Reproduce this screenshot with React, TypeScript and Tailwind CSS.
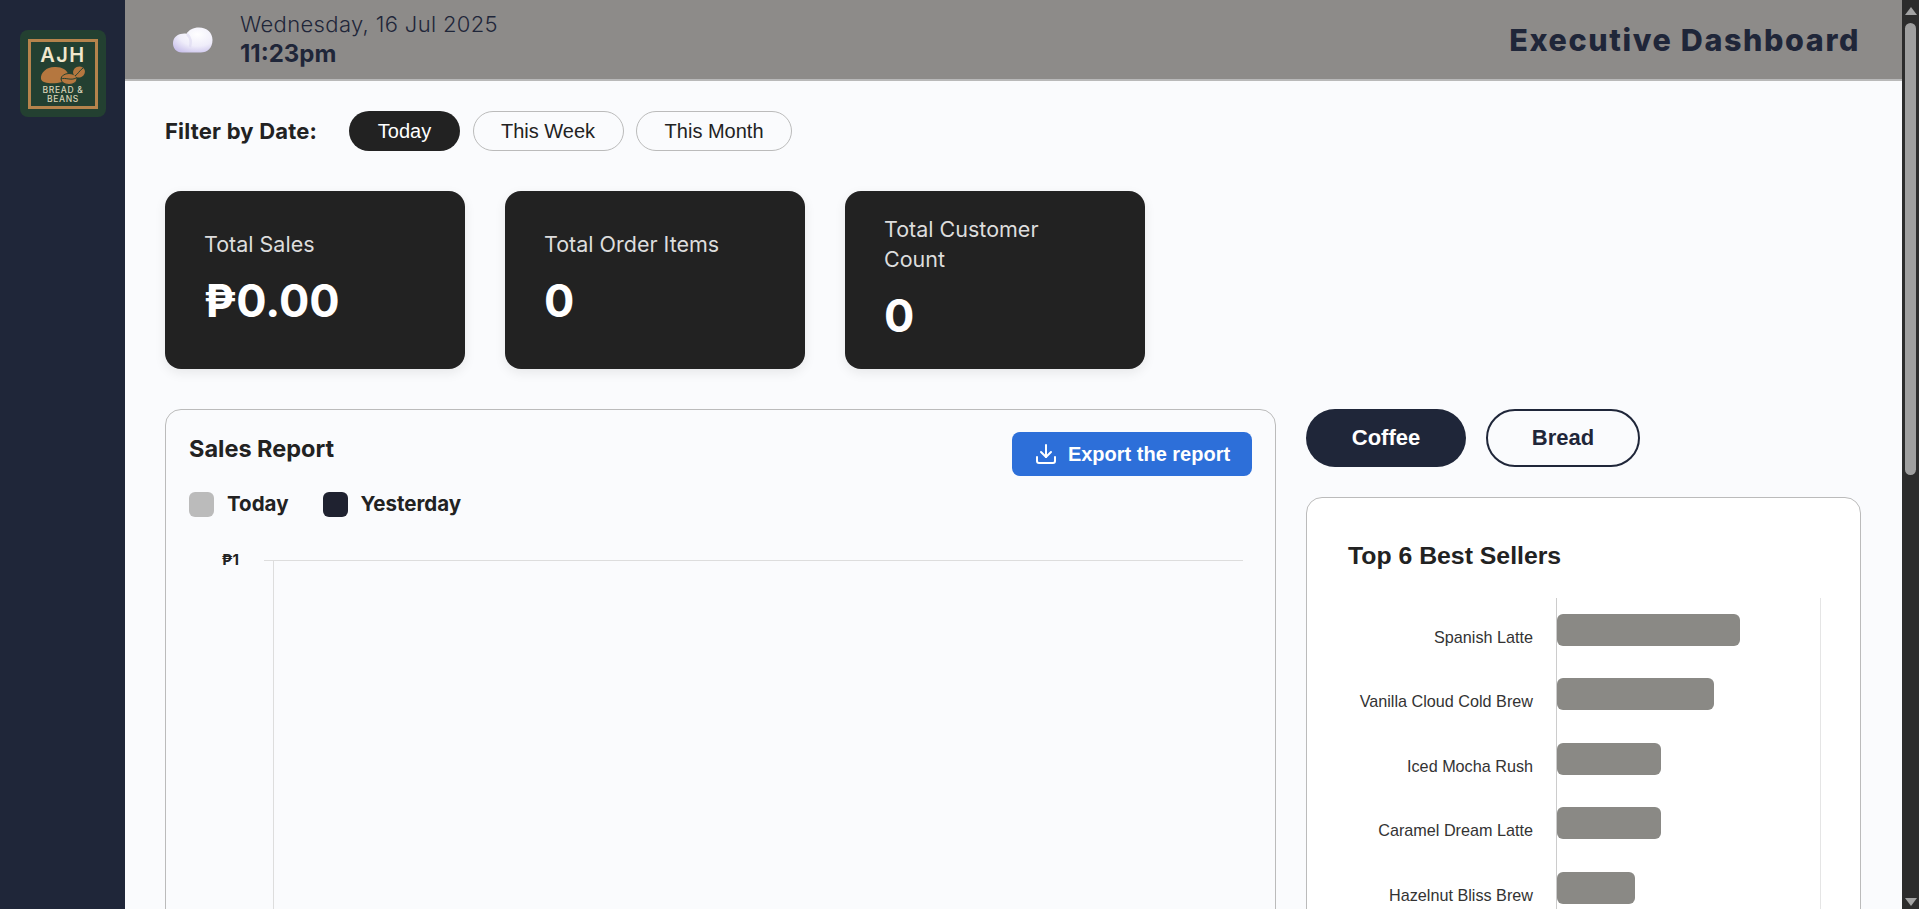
import { Download } from "lucide-react";

const sellers = [
  { name: "Spanish Latte", qty: 7 },
  { name: "Vanilla Cloud Cold Brew", qty: 6 },
  { name: "Iced Mocha Rush", qty: 4 },
  { name: "Caramel Dream Latte", qty: 4 },
  { name: "Hazelnut Bliss Brew", qty: 3 },
];

function Logo() {
  return (
    <div className="flex h-[87px] w-[86px] items-center justify-center rounded-lg bg-[#234031]">
      <div className="flex h-[70px] w-[70px] flex-col items-center border-[3px] border-[#b5834c] pt-[3px] font-['Inter',sans-serif] text-[#f1e7cd]">
        <div className="text-[20px] leading-[21px] font-semibold tracking-[1.5px]">AJH</div>
        <svg viewBox="0 0 46 19" className="h-[19px] w-[46px]">
          <path d="M1 13C0 6 8 0 16 1c6 0 11 3 12 7-3 1-5 4-6 8-7 2-20 2-21-3z" fill="#b5773f" />
          <ellipse cx="29" cy="13" rx="8" ry="5.5" fill="#b5773f" stroke="#234031" strokeWidth="1" />
          <path d="M21 13c4-2 10 2 15-1" stroke="#234031" strokeWidth="1" fill="none" />
          <ellipse cx="39" cy="6" rx="6" ry="5.5" fill="#b5773f" transform="rotate(-25 39 6)" />
          <path d="M35 10c3-2 4-5 8-8" stroke="#234031" strokeWidth="1" fill="none" />
        </svg>
        <div className="mt-[1px] text-center text-[8.5px] leading-[9.5px] font-medium tracking-[0.7px] text-[#d9d3b8]">
          BREAD &amp;
          <br />
          BEANS
        </div>
      </div>
    </div>
  );
}

function Cloud() {
  return (
    <svg viewBox="0 0 42 28" className="h-[28px] w-[42px]">
      <defs>
        <radialGradient id="cloudFill" cx="0.62" cy="0.28" r="0.85">
          <stop offset="0" stopColor="#ffffff" />
          <stop offset="0.55" stopColor="#efedfa" />
          <stop offset="1" stopColor="#c6bdea" />
        </radialGradient>
        <filter id="cloudBlur">
          <feGaussianBlur stdDeviation="0.5" />
        </filter>
      </defs>
      <g filter="url(#cloudBlur)">
        <path
          d="M10 26.5C4 26.5 1 22 1 17.5c0-5 3-8.5 7.5-9.5 2-.5 4-.7 6-.3C17 4 21 1.5 27 1.5c8 0 13.5 5 13.5 12.5 0 8-5 12.5-12 12.5z"
          fill="url(#cloudFill)"
        />
        <path d="M15 8c3 3 5 7 3 13" stroke="#dcd8f0" strokeWidth="2.5" fill="none" opacity="0.6" />
      </g>
    </svg>
  );
}

function StatCard({ label, value }: { label: string; value: string }) {
  return (
    <div className="flex h-[178px] w-[300px] flex-col justify-center rounded-2xl bg-[#222222] pr-[45px] pb-[3px] pl-[39px] shadow-[0_4px_12px_rgba(0,0,0,0.08)]">
      <div className="text-[21.5px] leading-[30px] text-[#dddddd]">{label}</div>
      <div className="mt-[14px] text-[45px] leading-[56px] font-bold text-white">{value}</div>
    </div>
  );
}

function FilterButton({ label, active }: { label: string; active?: boolean }) {
  return (
    <button
      className={
        active
          ? "h-[40px] w-[111px] rounded-full bg-[#222222] font-['Liberation_Sans',sans-serif] text-[20px] text-white"
          : "h-[40px] rounded-full border border-[#bbbbbb] px-[27.5px] font-['Liberation_Sans',sans-serif] text-[20px] text-[#222222]"
      }
    >
      {label}
    </button>
  );
}

function Scrollbar() {
  return (
    <div className="flex h-full w-[17px] shrink-0 flex-col items-center bg-[#2c2c2c]">
      <div className="mt-[7px] h-0 w-0 border-x-[6px] border-b-[8px] border-x-transparent border-b-[#a3a3a3]" />
      <div className="mt-[8px] h-[452px] w-[11px] rounded-full bg-[#9f9f9f]" />
      <div className="mt-auto mb-[3px] h-0 w-0 border-x-[6px] border-t-[8px] border-x-transparent border-t-[#a3a3a3]" />
    </div>
  );
}

export default function App() {
  return (
    <div className="flex h-screen overflow-hidden bg-[#fafbfd] font-['Inter',sans-serif] text-[#222222]">
      {/* sidebar */}
      <aside className="h-full w-[125px] shrink-0 bg-[#1f2639] pt-[30px] pl-[20px]">
        <Logo />
      </aside>

      <div className="min-w-0 flex-1">
        {/* top bar */}
        <header className="flex h-[81px] items-center justify-between border-b-2 border-[#b9b9b9] bg-[#8d8b89] pr-[42px] pl-[47px] text-[#1f2639]">
          <div className="flex items-center gap-[26px]">
            <Cloud />
            <div className="-mt-[2px]">
              <div className="text-[22px] leading-[29px] font-light tracking-[0.35px]">Wednesday, 16 Jul 2025</div>
              <div className="text-[24px] leading-[29px] font-bold">11:23pm</div>
            </div>
          </div>
          <div className="text-[30.5px] font-extrabold tracking-[1.6px]">Executive Dashboard</div>
        </header>

        <main className="pt-[30px] pr-[41px] pl-[40px]">
          {/* date filter */}
          <div className="flex h-[40px] items-center">
            <div className="mr-[31px] w-[153px] text-[22px] font-bold tracking-[0.2px] whitespace-nowrap">
              Filter by Date:
            </div>
            <div className="flex gap-[12.5px]">
              <FilterButton label="Today" active />
              <FilterButton label="This Week" />
              <FilterButton label="This Month" />
            </div>
          </div>

          {/* stat cards */}
          <div className="mt-[40px] flex gap-[40px]">
            <StatCard label="Total Sales" value="₱0.00" />
            <StatCard label="Total Order Items" value="0" />
            <StatCard label="Total Customer Count" value="0" />
          </div>

          <div className="mt-[40px] flex items-start gap-[30px]">
            {/* sales report */}
            <section className="h-[800px] w-[1111px] shrink-0 rounded-2xl border border-[#bbbbbb] px-[23px] pt-[22px]">
              <div className="flex items-start justify-between">
                <h2 className="-mt-[1px] text-[23.5px] leading-[36px] font-bold">Sales Report</h2>
                <button className="flex h-[44px] w-[240px] items-center justify-center gap-[10px] rounded-lg bg-[#2d6fd9] font-['Liberation_Sans',sans-serif] text-[20px] font-bold text-white">
                  <Download size={24} strokeWidth={2} />
                  Export the report
                </button>
              </div>
              <div className="mt-[13px] flex items-center text-[20.5px] font-bold">
                <span className="h-[25px] w-[25px] rounded-md bg-[#bbbbbb]" />
                <span className="mr-[35px] ml-[13px]">Today</span>
                <span className="h-[25px] w-[25px] rounded-md bg-[#1f2230]" />
                <span className="ml-[12px]">Yesterday</span>
              </div>
              <div className="mt-[40px] flex items-start">
                <div className="-mt-[10px] w-[50px] text-right text-[15px] leading-[20px] font-bold">₱1</div>
                <div className="mr-[9px] ml-[25px] flex-1 border-t border-[#dddddd]">
                  <div className="ml-[9px] h-[500px] border-l border-[#dddddd]" />
                </div>
              </div>
            </section>

            {/* best sellers */}
            <section className="min-w-0 flex-1 font-['Liberation_Sans',sans-serif]">
              <div className="flex gap-[20px]">
                <button className="h-[58px] w-[160px] rounded-full bg-[#1f2639] pb-[2px] text-[22px] font-bold text-white">
                  Coffee
                </button>
                <button className="h-[58px] w-[154px] rounded-full border-2 border-[#1f2639] pb-[2px] text-[22px] font-bold text-[#1f2639]">
                  Bread
                </button>
              </div>
              <div className="mt-[30px] h-[700px] rounded-2xl border border-[#bbbbbb] bg-white pt-[41px] pl-[41px]">
                <h3 className="text-[24.8px] leading-[34px] font-bold">Top 6 Best Sellers</h3>
                <div className="mt-[25px] flex">
                  <div className="w-[185px] shrink-0 pt-[27px]">
                    {sellers.map((s) => (
                      <div key={s.name} className="h-[64.4px] text-right text-[16.2px] leading-[24px] text-[#333333]">
                        {s.name}
                      </div>
                    ))}
                  </div>
                  <div className="ml-[22.5px] h-[420px] w-[265px] border-r border-l border-r-[#e5e5e5] border-l-[#cccccc] pt-[16px]">
                    {sellers.map((s) => (
                      <div key={s.name} className="h-[64.4px]">
                        <div className="h-[32px] rounded-md bg-[#8a8985]" style={{ width: s.qty * 26.2 }} />
                      </div>
                    ))}
                  </div>
                </div>
              </div>
            </section>
          </div>
        </main>
      </div>

      <Scrollbar />
    </div>
  );
}
